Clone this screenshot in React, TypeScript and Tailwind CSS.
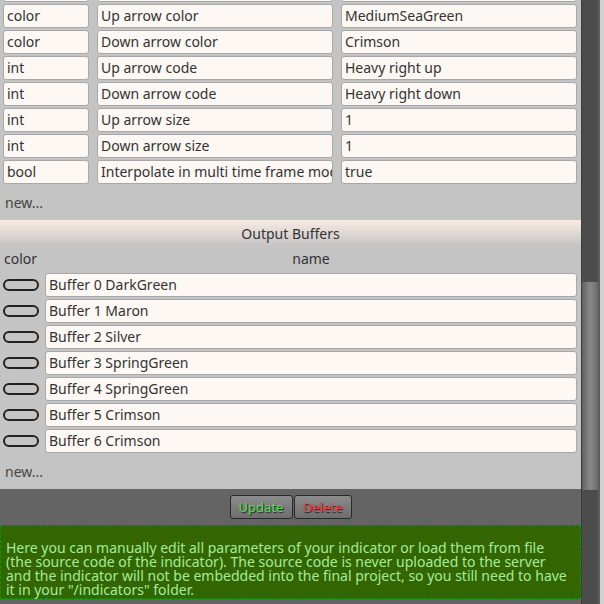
import React from "react";

type Param = { type: string; name: string; value: string };

const params: Param[] = [
  { type: "", name: "", value: "" },
  { type: "color", name: "Up arrow color", value: "MediumSeaGreen" },
  { type: "color", name: "Down arrow color", value: "Crimson" },
  { type: "int", name: "Up arrow code", value: "Heavy right up" },
  { type: "int", name: "Down arrow code", value: "Heavy right down" },
  { type: "int", name: "Up arrow size", value: "1" },
  { type: "int", name: "Down arrow size", value: "1" },
  { type: "bool", name: "Interpolate in multi time frame mode", value: "true" },
];

const buffers = [
  "Buffer 0 DarkGreen",
  "Buffer 1 Maron",
  "Buffer 2 Silver",
  "Buffer 3 SpringGreen",
  "Buffer 4 SpringGreen",
  "Buffer 5 Crimson",
  "Buffer 6 Crimson",
];

// single text field of the editor grid
const Field = ({ text, className = "" }: { text: string; className?: string }) => (
  <div
    className={`h-[24px] flex items-center px-[3px] pb-[1px] bg-[#fdf8f4] border border-[#a8a8a8] rounded-[3px] overflow-hidden whitespace-nowrap text-[#333] ${className}`}
  >
    {text}
  </div>
);

const NewLink = () => (
  <div className="h-[36px] flex items-center px-[5px] text-[#444]">new...</div>
);

export default function App() {
  return (
    <div
      className="w-[604px] h-[604px] overflow-hidden flex bg-[#646464] text-[14px] leading-[19px]"
      style={{ fontFamily: '"Noto Sans", "Open Sans", sans-serif' }}
    >
      <div className="w-[581px] flex flex-col">
        {/* Input parameters */}
        <div className="bg-[#c4c4c4] -mt-[22px]">
          <div className="flex flex-col gap-[2px] pl-[3px] pr-[4px]">
            {params.map((p, i) => (
              <div key={i} className="flex gap-[8px]">
                <Field text={p.type} className="w-[86px]" />
                <Field text={p.name} className="w-[236px]" />
                <Field text={p.value} className="flex-1" />
              </div>
            ))}
          </div>
          <NewLink />
        </div>

        {/* Output buffers */}
        <div className="bg-[#c4c4c4]">
          <div className="h-[26px] flex items-center justify-center text-[#333] bg-gradient-to-b from-[#f9ece4] to-[#c4c4c4]">
            Output Buffers
          </div>
          <div className="h-[27px] flex items-center pb-[2px] text-[#333]">
            <div className="w-[45px] pl-[4px]">color</div>
            <div className="flex-1 text-center pr-[4px]">name</div>
          </div>
          <div className="flex flex-col gap-[2px] pl-[3px] pr-[4px]">
            {buffers.map((b) => (
              <div key={b} className="flex items-center gap-[6px]">
                <div className="w-[36px] h-[12px] rounded-[6px] border-2 border-[#222] bg-[#c4c4c4]" />
                <Field text={b} className="flex-1" />
              </div>
            ))}
          </div>
          <NewLink />
        </div>

        {/* Actions */}
        <div className="h-[36px] flex items-center justify-center gap-[1px]">
          <button className="h-[24px] w-[63px] rounded-[3px] border border-[#2a2a2a] bg-gradient-to-b from-[#8c8c8c] to-[#6e6e6e] text-[13px] text-[#4ee04e] [text-shadow:1px_1px_1px_#222]">
            Update
          </button>
          <button className="h-[24px] w-[58px] rounded-[3px] border border-[#2a2a2a] bg-gradient-to-b from-[#8c8c8c] to-[#6e6e6e] text-[13px] text-[#f04848] [text-shadow:1px_1px_1px_#222]">
            Delete
          </button>
        </div>

        {/* Help note */}
        <div className="h-[74px] bg-[#336600] border border-dashed border-[#00a000] pt-[15px] pl-[5px] text-[14px] leading-[14px] text-[#a4ec9c] whitespace-nowrap">
          Here you can manually edit all parameters of your indicator or load them from file
          <br />
          (the source code of the indicator). The source code is never uploaded to the server
          <br />
          and the indicator will not be embedded into the final project, so you still need to have
          <br />
          it in your "/indicators" folder.
        </div>
      </div>

      {/* Scrollbar */}
      <div className="w-[17px] flex flex-col bg-[#4c4c4c] border-l border-[#3c3c3c]">
        <div className="h-[282px]" />
        <div className="h-[208px] bg-gradient-to-r from-[#606060] via-[#8a8a8a] to-[#6a6a6a]" />
      </div>
      <div className="w-[2px] bg-[#5c5c5c]" />
      <div className="flex-1 bg-[#d0d0d0]" />
    </div>
  );
}
